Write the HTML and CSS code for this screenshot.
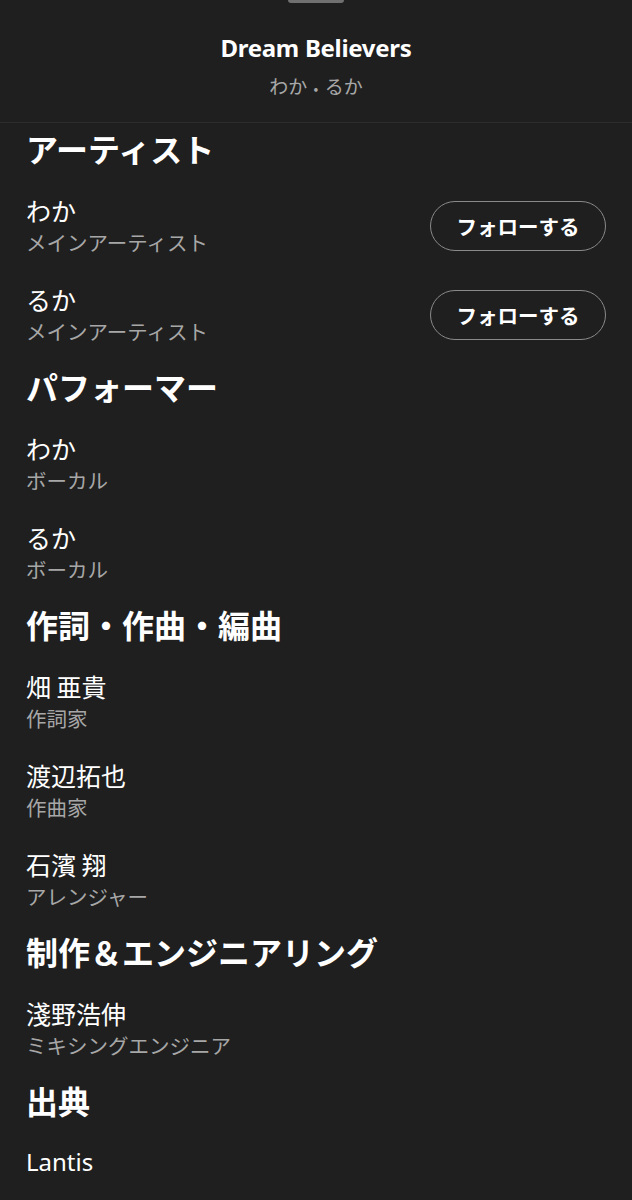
FILE: index.html
```html
<!DOCTYPE html>
<html lang="ja">
<head>
  <meta charset="UTF-8" />
  <meta name="viewport" content="width=device-width, initial-scale=1.0"/>
  <title>クレジット - Dream Believers</title>
  <link rel="stylesheet" href="styles.css">
</head>

<body>
  <div class="sheet-handle"></div>

  <header class="sheet-header">
    <h1 class="track-title">Dream Believers</h1>
    <p class="track-artists">わか <span class="dot">•</span> るか</p>
  </header>

  <main class="credits">
    <section class="credit-section">
      <h2>アーティスト</h2>
      <div class="credit-row">
        <div class="credit-info">
          <div class="credit-name">わか</div>
          <div class="credit-role">メインアーティスト</div>
        </div>
        <button class="follow-btn">フォローする</button>
      </div>
      <div class="credit-row">
        <div class="credit-info">
          <div class="credit-name">るか</div>
          <div class="credit-role">メインアーティスト</div>
        </div>
        <button class="follow-btn">フォローする</button>
      </div>
    </section>

    <section class="credit-section">
      <h2>パフォーマー</h2>
      <div class="credit-row">
        <div class="credit-info">
          <div class="credit-name">わか</div>
          <div class="credit-role">ボーカル</div>
        </div>
      </div>
      <div class="credit-row">
        <div class="credit-info">
          <div class="credit-name">るか</div>
          <div class="credit-role">ボーカル</div>
        </div>
      </div>
    </section>

    <section class="credit-section">
      <h2>作詞・作曲・編曲</h2>
      <div class="credit-row">
        <div class="credit-info">
          <div class="credit-name">畑 亜貴</div>
          <div class="credit-role">作詞家</div>
        </div>
      </div>
      <div class="credit-row">
        <div class="credit-info">
          <div class="credit-name">渡辺拓也</div>
          <div class="credit-role">作曲家</div>
        </div>
      </div>
      <div class="credit-row">
        <div class="credit-info">
          <div class="credit-name">石濱 翔</div>
          <div class="credit-role">アレンジャー</div>
        </div>
      </div>
    </section>

    <section class="credit-section">
      <h2>制作＆エンジニアリング</h2>
      <div class="credit-row">
        <div class="credit-info">
          <div class="credit-name">淺野浩伸</div>
          <div class="credit-role">ミキシングエンジニア</div>
        </div>
      </div>
    </section>

    <section class="credit-section">
      <h2>出典</h2>
      <div class="credit-row">
        <div class="credit-info">
          <div class="credit-name latin">Lantis</div>
        </div>
      </div>
    </section>
  </main>
</body>
</html>
```

FILE: styles.css
```css
:root {
  --bg: #1f1f1f;
  --text: #ffffff;
  --muted: #a7a7a7;
  --divider: #2c2c2c;
  --btn-border: #8a8a8a;
}

body {
  margin: 0;
  background-color: var(--bg);
  color: var(--text);
  font-family: "Noto Sans CJK JP", "Noto Sans", sans-serif;
  height: 1200px;
  overflow: hidden;
}

/* drag handle at the very top */
.sheet-handle {
  width: 56px;
  height: 3px;
  margin: 0 auto;
  background-color: #707070;
  border-radius: 0 0 3px 3px;
}

.sheet-header {
  text-align: center;
  padding-top: 29px;
  height: 90px;
  border-bottom: 1px solid var(--divider);
}

.track-title {
  margin: 0;
  font-family: "Noto Sans", "Noto Sans CJK JP", sans-serif;
  font-size: 24px;
  font-weight: 700;
  line-height: 32px;
  letter-spacing: -0.3px;
}

.track-artists {
  margin: 8px 0 0;
  font-size: 19px;
  line-height: 28px;
  color: var(--muted);
}

.track-artists .dot {
  font-size: 14px;
  margin: 0 2px;
}

.credits {
  padding: 5px 26px 0;
}

.credit-section {
  margin-bottom: 20px;
}

.credit-section h2 {
  margin: 0 0 27px;
  font-size: 32px;
  font-weight: 700;
  line-height: 40px;
}

.credit-row {
  display: flex;
  align-items: center;
  justify-content: space-between;
  margin-bottom: 27px;
}

.credit-row:last-child {
  margin-bottom: 0;
}

.credit-name {
  font-size: 25px;
  line-height: 30px;
}

.credit-name.latin {
  font-family: "Noto Sans", sans-serif;
  font-size: 24px;
}

.credit-role {
  margin-top: 2px;
  font-size: 20.5px;
  line-height: 30px;
  color: var(--muted);
}

.follow-btn {
  width: 176px;
  height: 50px;
  background: transparent;
  color: var(--text);
  border: 1.5px solid var(--btn-border);
  border-radius: 25px;
  font-family: "Noto Sans CJK JP", sans-serif;
  font-size: 20.5px;
  font-weight: 700;
  cursor: pointer;
}
```
